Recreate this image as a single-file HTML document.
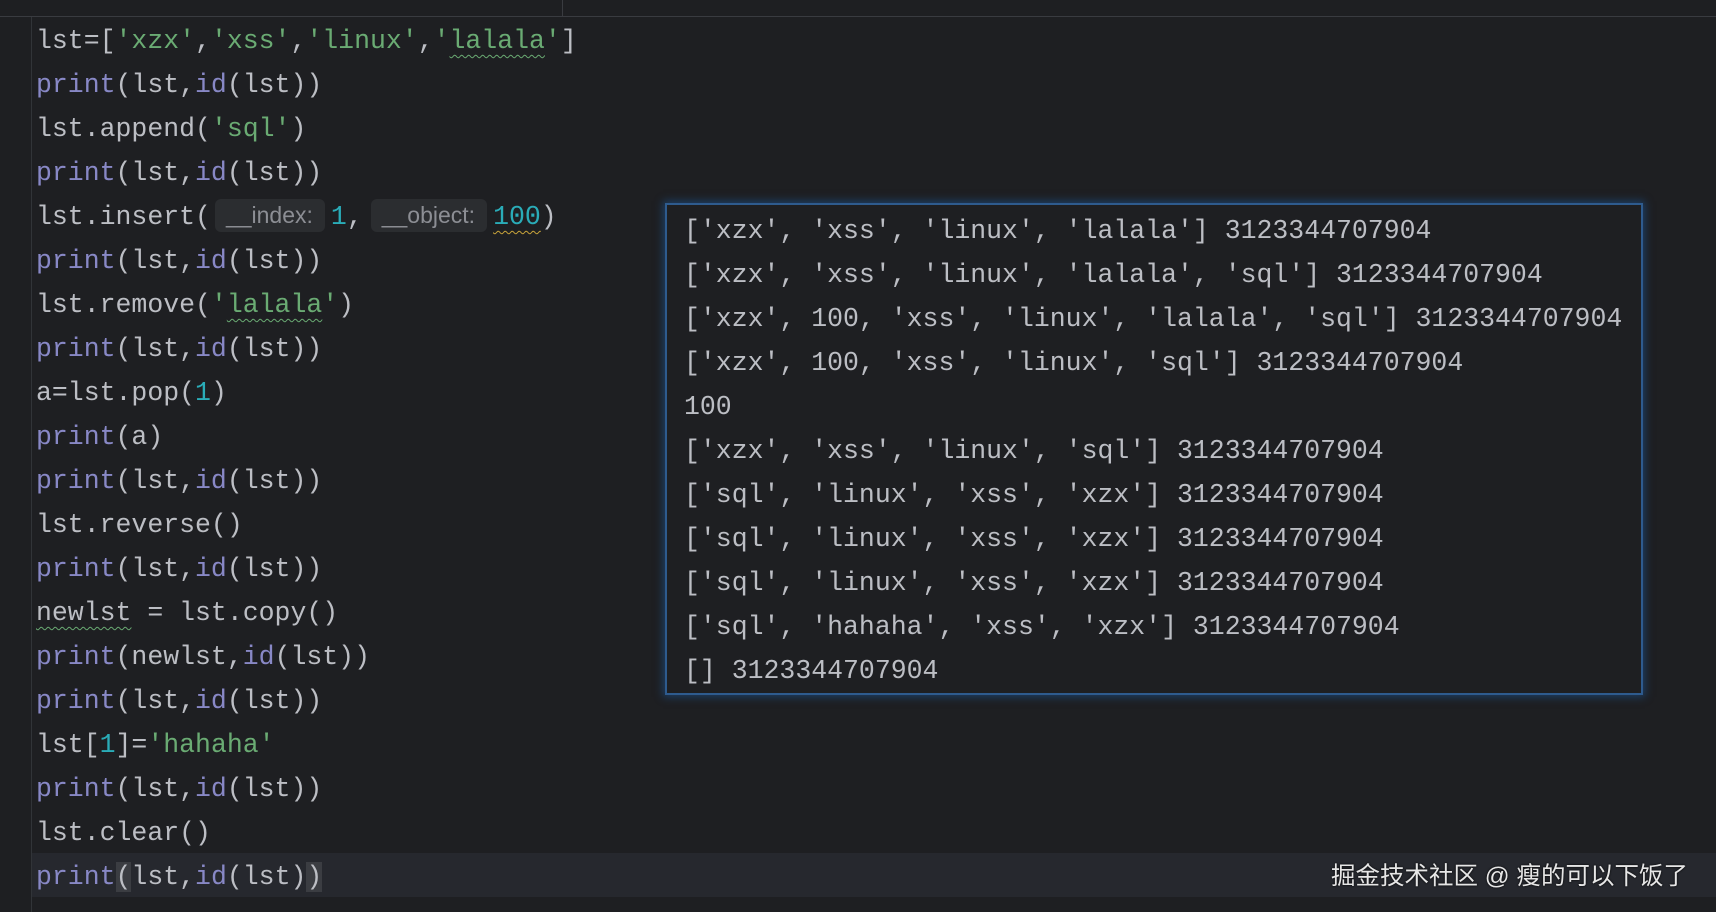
<!DOCTYPE html>
<html><head><meta charset="utf-8"><style>
html,body{margin:0;padding:0}
body{width:1716px;height:912px;background:#1e1f22;position:relative;overflow:hidden;font-family:"Liberation Mono",monospace;}
.sep{position:absolute;left:0;top:16px;width:1716px;height:1px;background:#393b40}
.vsep{position:absolute;left:562px;top:0;width:1px;height:16px;background:#393b40}
.gut{position:absolute;left:31px;top:17px;width:1px;height:895px;background:#313438}
.cur{position:absolute;left:32px;top:853px;width:1684px;height:44px;background:#26282e}
.code{position:absolute;left:36px;top:19px;font-size:26.5px;line-height:44px;color:#bcbec4;white-space:pre}
.b{color:#8888c6}.s{color:#6aab73}.n{color:#2aacb8}
.w{text-decoration:underline wavy #6aab73;text-decoration-thickness:1px;text-underline-offset:6px}
.wy{text-decoration:underline wavy #c9a43a;text-decoration-thickness:1px;text-underline-offset:6px}
.h{display:inline-block;background:#2b2d30;color:#8c8e94;font-family:"Liberation Sans",sans-serif;font-size:23px;line-height:33px;padding:0 12px 0 11px;border-radius:6px;vertical-align:1px;margin:0 6px 0 4px}
.br{background:#3b3d42}
.out{position:absolute;left:665px;top:203px;width:974px;height:488px;border:2px solid #2e5b8e;box-shadow:0 0 8px 2px #1d3f66;background:#1e1f22}
.ot{position:absolute;left:684px;top:209px;font-size:26.5px;line-height:44px;color:#bcbec4;white-space:pre}
.wm{position:absolute;left:1331px;top:857px;font-family:"Liberation Sans","Noto Sans CJK SC",sans-serif;font-size:24.5px;color:#e6e6e6;white-space:pre;text-shadow:0 0 2px #000}
</style></head><body>
<div class="sep"></div><div class="vsep"></div><div class="cur"></div><div class="gut"></div>
<div class="code">lst=[<span class="s">'xzx'</span>,<span class="s">'xss'</span>,<span class="s">'linux'</span>,<span class="s">'<span class="w">lalala</span>'</span>]
<span class="b">print</span>(lst,<span class="b">id</span>(lst))
lst.append(<span class="s">'sql'</span>)
<span class="b">print</span>(lst,<span class="b">id</span>(lst))
lst.insert(<span class="h">__index:</span><span class="n">1</span>,<span class="h" style="margin-left:8px">__object:</span><span class="n wy">100</span>)
<span class="b">print</span>(lst,<span class="b">id</span>(lst))
lst.remove(<span class="s">'<span class="w">lalala</span>'</span>)
<span class="b">print</span>(lst,<span class="b">id</span>(lst))
a=lst.pop(<span class="n">1</span>)
<span class="b">print</span>(a)
<span class="b">print</span>(lst,<span class="b">id</span>(lst))
lst.reverse()
<span class="b">print</span>(lst,<span class="b">id</span>(lst))
<span class="w">newlst</span> = lst.copy()
<span class="b">print</span>(newlst,<span class="b">id</span>(lst))
<span class="b">print</span>(lst,<span class="b">id</span>(lst))
lst[<span class="n">1</span>]=<span class="s">'hahaha'</span>
<span class="b">print</span>(lst,<span class="b">id</span>(lst))
lst.clear()
<span class="b">print</span><span class="br">(</span>lst,<span class="b">id</span>(lst)<span class="br">)</span></div>
<div class="out"></div>
<div class="ot">['xzx', 'xss', 'linux', 'lalala'] 3123344707904
['xzx', 'xss', 'linux', 'lalala', 'sql'] 3123344707904
['xzx', 100, 'xss', 'linux', 'lalala', 'sql'] 3123344707904
['xzx', 100, 'xss', 'linux', 'sql'] 3123344707904
100
['xzx', 'xss', 'linux', 'sql'] 3123344707904
['sql', 'linux', 'xss', 'xzx'] 3123344707904
['sql', 'linux', 'xss', 'xzx'] 3123344707904
['sql', 'linux', 'xss', 'xzx'] 3123344707904
['sql', 'hahaha', 'xss', 'xzx'] 3123344707904
[] 3123344707904</div>
<div class="wm">掘金技术社区 @ 瘦的可以下饭了</div>
</body></html>
